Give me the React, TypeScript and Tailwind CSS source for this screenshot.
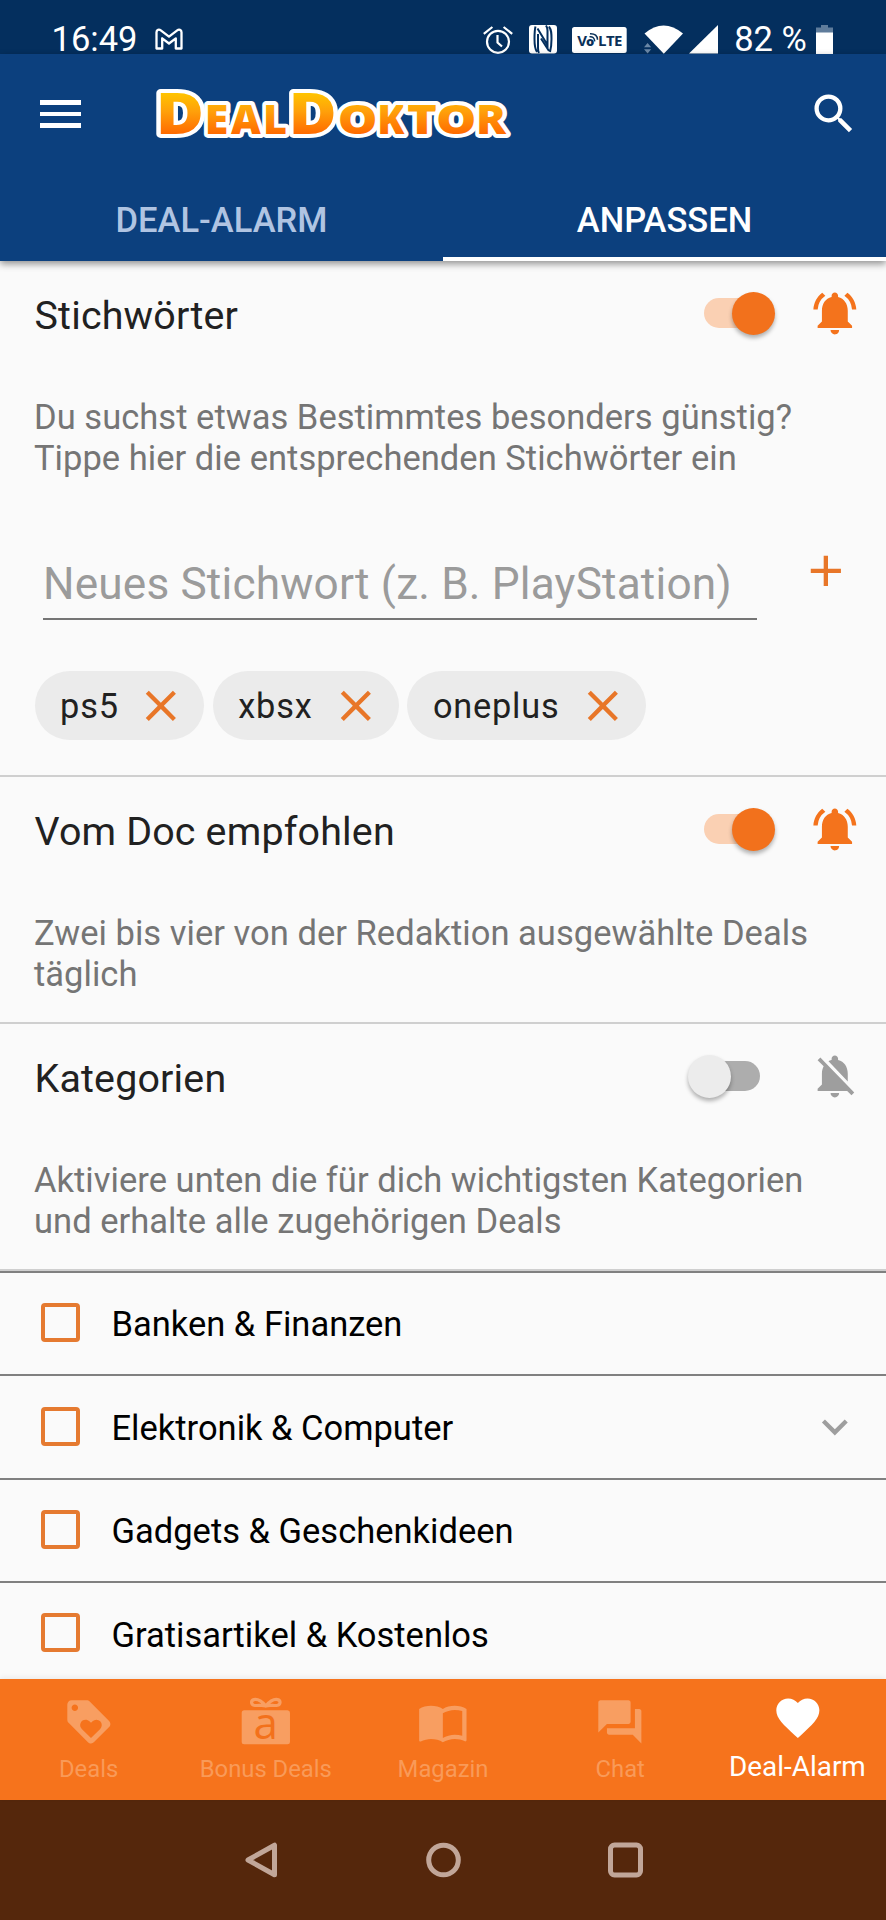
import type { ReactNode } from "react";
import {
  MdAdd,
  MdClose,
  MdExpandMore,
  MdFavorite,
  MdImportContacts,
  MdLoyalty,
  MdNotificationsActive,
  MdNotificationsOff,
  MdQuestionAnswer,
  MdSearch,
} from "react-icons/md";

const ICON = "h-[51.7px] w-[51.7px] shrink-0";

function StatusBar() {
  return (
    <div className="flex h-[54px] shrink-0 bg-[#042f5e] text-[34.5px] leading-[40.4px] text-white">
      <div className="flex w-[483px] shrink-0 pl-[51.5px]">
        <span className="mt-[19px] w-[102.5px] shrink-0">16:49</span>
        <svg className="mt-[28px] h-[22px] w-[30px]" viewBox="0 0 30 22" fill="none" stroke="#fff" strokeWidth="2.3" strokeLinejoin="round">
          <path d="M2.5 20.5V4.2C2.5 1.8 5 1 6.8 2.4L15 8.6l8.2-6.2C25 1 27.5 1.8 27.5 4.2V20.5H21.8V10.3L15 15.5 8.2 10.3V20.5Z" />
        </svg>
      </div>
      <svg className="mt-[25px] h-[29px] w-[30px] shrink-0" viewBox="0 0 30 29" fill="none" stroke="#fff" strokeWidth="2.2">
        <circle cx="15" cy="16.8" r="11" />
        <path d="M14.5 10v7.5l4.5 4M.8 8.8 9.4 2M29.2 8.8 20.6 2" />
      </svg>
      <svg className="mt-[25px] ml-[16px] h-[28.5px] w-[28px] shrink-0" viewBox="0 0 28 28.5">
        <rect width="28" height="28.5" rx="3" fill="#fff" />
        <path
          d="M6.500 1.500C5.500 5 5.500 9 5.500 14S5.500 23.500 8 27M8.500 3.500 18.500 20V5.500C18.500 3.500 18 2 17 .5M10 28c-.8-1.500-1-3-1-5V9M21 27c1-3.500 1.500-7 1.500-13S22.500 5 20 1.500M12 13.500 20 26"
          fill="none"
          stroke="#042f5e"
          strokeWidth="2"
        />
      </svg>
      <svg className="mt-[27px] ml-[15.3px] h-[26px] w-[54.7px] shrink-0 overflow-visible" viewBox="0 0 54.7 26">
        <rect width="54.7" height="26" rx="2.5" fill="#fff" />
        <g fill="#0a3058" fontFamily="'Open Sans', sans-serif" fontWeight="700">
          <text x="5.2" y="18.7" fontSize="15">V</text>
          <text x="14" y="19" fontSize="13" fontWeight="800">o</text>
          <text x="26" y="18.7" fontSize="15" textLength="24.5">LTE</text>
        </g>
        <path d="M17.500 9.800q4.500-.8 5.300 4.500M18 6.800q7.500-.3 7.500 6" fill="none" stroke="#0a3058" strokeWidth="1.5" />
      </svg>
      <svg className="mt-[25px] ml-[16.7px] h-[29px] w-[40px] shrink-0" viewBox="0 0 40 29">
        <path d="M.5 8.500Q19.500-7.500 39 8.500L19.800 28.700Z" fill="#fff" />
        <path d="M0 22.300 3.600 18l3.600 4.300ZM0 24.300h7.200L3.600 28.500Z" fill="#6a87a6" />
      </svg>
      <svg className="mt-[25px] ml-[5.5px] h-[29px] w-[29px] shrink-0" viewBox="0 0 29 29">
        <path d="M29 0v28.500H0Z" fill="#fff" />
      </svg>
      <span className="mt-[19px] ml-[16px] w-[82px] shrink-0 whitespace-nowrap">82 %</span>
      <svg className="mt-[25px] h-[29px] w-[17px] shrink-0" viewBox="0 0 17 29">
        <path d="M5 0h7v2.500h5V8H0V2.500h5Z" fill="#5f7c9b" />
        <path d="M0 7.500h17V29H0Z" fill="#fff" />
      </svg>
    </div>
  );
}

/* Glyph, left offset, horizontal scale and font size of each wordmark letter. */
const WORDMARK: [string, number, number, number][] = [
  ["D", 2.7, 1.147, 57.3],
  ["E", 51.7, 1.06, 40.6],
  ["A", 78.0, 1.01, 40.6],
  ["L", 110.1, 1.02, 40.6],
  ["D", 135.5, 1.147, 57.3],
  ["O", 184.7, 1.23, 40.6],
  ["K", 224.2, 0.98, 40.6],
  ["T", 254.0, 1.25, 40.6],
  ["O", 283.0, 1.25, 40.6],
  ["R", 323.0, 1.09, 40.6],
];

function Wordmark() {
  return (
    <svg className="h-[60px] w-[370px] shrink-0 overflow-visible" viewBox="0 0 370 60" role="img" aria-label="DealDoktor">
      <defs>
        <linearGradient id="wordmark" gradientUnits="userSpaceOnUse" x1="0" y1="-41" x2="0" y2="0">
          <stop offset="0" stopColor="#ffc400" />
          <stop offset="0.45" stopColor="#ffa00a" />
          <stop offset="1" stopColor="#ff6a00" />
        </linearGradient>
      </defs>
      {WORDMARK.map(([glyph, x, scale, size], i) => (
        <text
          key={i}
          transform={`translate(${x} 50) scale(${scale} 1)`}
          fontSize={size}
          fontFamily="'Open Sans', sans-serif"
          fontWeight="800"
          fill="url(#wordmark)"
          stroke="#fff"
          strokeWidth="7.8"
          strokeLinejoin="round"
          paintOrder="stroke"
        >
          {glyph}
        </text>
      ))}
    </svg>
  );
}

function Header() {
  return (
    <header className="relative z-10 shrink-0 bg-[#0c407e] shadow-[0_3px_7px_rgba(0,0,0,0.42)]">
      <div className="flex h-[120px] items-center pr-[26px]">
        <button className="ml-[40.3px] flex w-[40.4px] flex-col gap-[7px]" aria-label="Menü">
          <span className="h-[4.7px] w-full bg-white" />
          <span className="h-[4.7px] w-full bg-white" />
          <span className="h-[4.7px] w-full bg-white" />
        </button>
        <div className="ml-[72px]">
          <Wordmark />
        </div>
        <MdSearch className={`${ICON} ml-auto text-white`} />
      </div>
      <nav className="grid h-[87px] grid-cols-2 text-[34.5px] leading-[40.4px] font-medium text-white">
        <div className="pt-[26px] text-center text-[#b0c4e2]">DEAL-ALARM</div>
        <div className="border-b-[4.5px] border-white pt-[26px] text-center">ANPASSEN</div>
      </nav>
    </header>
  );
}

function Switch({ on }: { on: boolean }) {
  return (
    <span className={`mt-[1px] flex h-[30px] w-[56px] items-center rounded-full ${on ? "justify-end bg-[#fad0b3]" : "justify-start bg-[#adadad]"}`}>
      <span
        className={`h-[43px] w-[43px] shrink-0 rounded-full shadow-[0_3px_4px_rgba(0,0,0,0.3)] ${on ? "-mr-[15.5px] bg-[#f2711c]" : "-ml-[15.5px] bg-[#ececec]"}`}
      />
    </span>
  );
}

function Section({ title, text, on, children }: { title: string; text: ReactNode; on: boolean; children?: ReactNode }) {
  return (
    <section className="shrink-0 border-b-2 border-[#cfcfcf] pb-[28px]">
      <div className="flex h-[103px] items-center pr-[25.6px] pl-[34.5px]">
        <h2 className="mt-[7px] mr-auto text-[39.4px] leading-[46px] tracking-[0.18px] text-[#212121]">{title}</h2>
        <Switch on={on} />
        {on ? (
          <MdNotificationsActive className={`${ICON} ml-[49px] text-[#f4731c]`} />
        ) : (
          <MdNotificationsOff className={`${ICON} ml-[49px] text-[#9e9e9e]`} />
        )}
      </div>
      <p className="mt-[33px] pl-[34px] text-[34.5px] leading-[40.5px] tracking-[0.03px] whitespace-nowrap text-[#757575]">{text}</p>
      {children}
    </section>
  );
}

function Chip({ label, width }: { label: string; width: string }) {
  return (
    <span className={`flex h-[69px] items-center justify-between rounded-full bg-[#ebebeb] pr-[17px] pl-[25.6px] text-[34.3px] leading-[40px] tracking-[0.8px] text-[#212121] ${width}`}>
      {label}
      <MdClose className={`${ICON} text-[#e87628]`} />
    </span>
  );
}

function Keywords() {
  return (
    <>
      <div className="mt-[75px] flex h-[67px] pr-[34.5px] pl-[43px]">
        <div className="h-[67px] w-[714px] border-b-2 border-[#757575] pt-[6px] text-[44.2px] leading-[50.5px] tracking-[0.16px] whitespace-nowrap text-[#9b9b9b]">
          Neues Stichwort (z. B. PlayStation)
        </div>
        <MdAdd className={`${ICON} mt-[-8px] ml-[43px] text-[#e87628]`} />
      </div>
      <div className="mt-[51px] mb-[7px] flex gap-[8.7px] pl-[34.5px]">
        <Chip label="ps5" width="w-[169.5px]" />
        <Chip label="xbsx" width="w-[186px]" />
        <Chip label="oneplus" width="w-[238.3px]" />
      </div>
    </>
  );
}

function CategoryRow({ label, expandable }: { label: string; expandable?: boolean }) {
  return (
    <div className="flex h-[103.4px] shrink-0 items-center border-t-2 border-[#808080] pr-[25.6px] pl-[41px]">
      <span className="-mt-[2px] h-[39px] w-[39px] rounded-[4px] border-[4px] border-[#e57a30]" />
      <span className="mt-[2px] mr-auto ml-[31.5px] text-[34.5px] leading-[40.4px] text-black">{label}</span>
      {expandable && <MdExpandMore className={`${ICON} text-[#9e9e9e]`} />}
    </div>
  );
}

function GiftIcon() {
  return (
    <svg className="h-[51.7px] w-[51.7px] overflow-visible" viewBox="0 0 51.7 51.7">
      <rect x="1.7" y="14.3" width="48.3" height="34" rx="2.5" fill="#f89e61" />
      <path
        d="M25.800 10C22 5.500 18 2.800 14 3.600 10.500 4.500 11 8.500 14 9.300c4 .8 8-.8 11.800.7 3.800-1.500 7.800.1 11.800-.7 3-.8 3.500-4.800 0-5.700-4-.8-8 1.900-11.800 6.400Z"
        fill="none"
        stroke="#f89e61"
        strokeWidth="3.2"
        strokeLinejoin="round"
      />
      <text x="25.8" y="43.3" textAnchor="middle" fontFamily="'Open Sans', sans-serif" fontSize="44" fontWeight="500" fill="#f3711b">
        a
      </text>
    </svg>
  );
}

function NavItem({ label, icon, active }: { label: string; icon: ReactNode; active?: boolean }) {
  return (
    <div
      className={
        active
          ? "flex flex-col items-center pt-[12.5px] text-[27.9px] leading-[33px] text-white"
          : "flex flex-col items-center pt-[16.5px] text-[23.8px] leading-[28px] text-[#f99a58]"
      }
    >
      {icon}
      <span className={active ? "mt-[6.5px] whitespace-nowrap" : "mt-[8px] whitespace-nowrap"}>{label}</span>
    </div>
  );
}

function BottomNav() {
  return (
    <nav className="relative z-10 grid h-[120.5px] shrink-0 grid-cols-5 bg-[#f6731c] shadow-[0_-2px_5px_rgba(0,0,0,0.06)]">
      <NavItem label="Deals" icon={<MdLoyalty className={`${ICON} text-[#f89e61]`} />} />
      <NavItem label="Bonus Deals" icon={<GiftIcon />} />
      <NavItem label="Magazin" icon={<MdImportContacts className={`${ICON} text-[#f89e61]`} />} />
      <NavItem label="Chat" icon={<MdQuestionAnswer className={`${ICON} text-[#f89e61]`} />} />
      <NavItem label="Deal-Alarm" active icon={<MdFavorite className={ICON} />} />
    </nav>
  );
}

function SystemNav() {
  return (
    <div className="flex flex-1 items-center justify-center gap-[147px] bg-[#55270c]">
      <svg className="h-[36px] w-[35px]" viewBox="0 0 35 36" fill="none" stroke="#c1a699" strokeWidth="5" strokeLinejoin="round">
        <path d="M30.500 3.200V32.800L4 18Z" />
      </svg>
      <svg className="h-[36px] w-[35px]" viewBox="0 0 35 36" fill="none" stroke="#c1a699" strokeWidth="5">
        <circle cx="17.5" cy="18" r="14.8" />
      </svg>
      <svg className="h-[36px] w-[35px]" viewBox="0 0 35 36" fill="none" stroke="#c1a699" strokeWidth="5">
        <rect x="2.5" y="3" width="30" height="30" rx="4" />
      </svg>
    </div>
  );
}

export default function App() {
  return (
    <div className="flex h-[1920px] w-[886px] flex-col overflow-hidden bg-[#fafafa] font-['Roboto',sans-serif]">
      <StatusBar />
      <Header />
      <main className="flex h-[1418px] shrink-0 flex-col overflow-hidden">
        <Section title="Stichwörter" on text={<>Du suchst etwas Bestimmtes besonders günstig?<br />Tippe hier die entsprechenden Stichwörter ein</>}>
          <Keywords />
        </Section>
        <Section title="Vom Doc empfohlen" on text={<>Zwei bis vier von der Redaktion ausgewählte Deals<br />täglich</>} />
        <Section title="Kategorien" on={false} text={<>Aktiviere unten die für dich wichtigsten Kategorien<br />und erhalte alle zugehörigen Deals</>} />
        <CategoryRow label="Banken & Finanzen" />
        <CategoryRow label="Elektronik & Computer" expandable />
        <CategoryRow label="Gadgets & Geschenkideen" />
        <CategoryRow label="Gratisartikel & Kostenlos" />
      </main>
      <BottomNav />
      <SystemNav />
    </div>
  );
}
